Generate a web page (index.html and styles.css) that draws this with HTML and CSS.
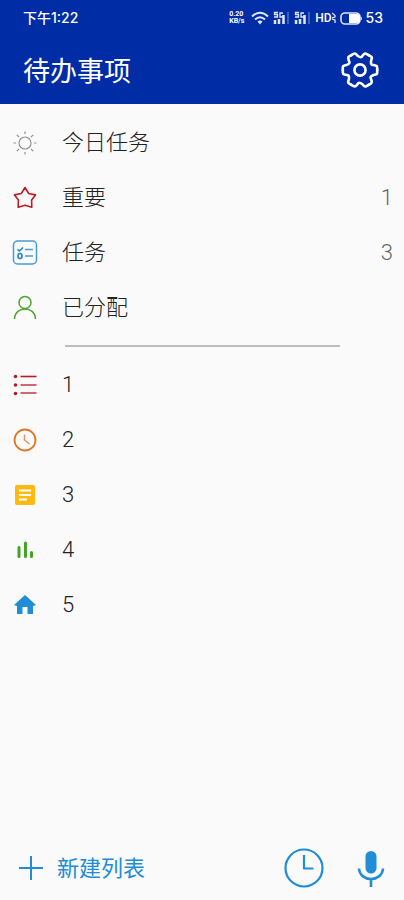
FILE: index.html
```html
<!DOCTYPE html>
<html lang="zh-CN">
<head>
<meta charset="utf-8">
<meta name="viewport" content="width=device-width, initial-scale=1">
<title>待办事项</title>
<link rel="stylesheet" href="styles.css">
</head>
<body>
<header class="header">
  <div class="status">
    <span class="status-time">下午1:22</span>
    <div class="status-icons">
      <span class="speed"><span>0.20</span><span>KB/s</span></span>
      <svg width="18" height="14" viewBox="0 0 18 14" fill="none" stroke="#dfe6ff" stroke-width="2"><path d="M1 5.500Q9-2 17 5.500M4 8.500Q9 4 14 8.500"/><path d="M6.500 10.500Q9 8.500 11.500 10.500L9 13.500Z" fill="#dfe6ff" stroke="none"/></svg>
      <svg width="17" height="14" viewBox="0 0 17 14" fill="none" stroke="#dfe6ff"><path d="M5 1.500H1.500V3.500H4.500V6H1M10 2H7V6H10V4.500" stroke-width="1.300"/><path d="M2 13V9M6 13V8M10.500 13V4" stroke-width="2.500"/><path d="M15 13V1" stroke="#3c61c4" stroke-width="2"/></svg>
      <svg width="17" height="14" viewBox="0 0 17 14" fill="none" stroke="#dfe6ff"><path d="M5 1.500H1.500V3.500H4.500V6H1M10 2H7V6H10V4.500" stroke-width="1.300"/><path d="M2 13V9M6 13V8M10.500 13V4" stroke-width="2.500"/><path d="M15 13V1" stroke="#3c61c4" stroke-width="2"/></svg>
      <span class="hd">HD</span>
      <svg class="waves" width="4" height="12" viewBox="0 0 4 12" fill="none" stroke="#dfe6ff" stroke-width="1.300"><path d="M0 1L3 3.500V5L0 6M0 7L3 8V11"/></svg>
      <svg class="battery" width="23" height="13" viewBox="0 0 23 13"><rect x="1" y="1" width="19" height="11" rx="4" fill="none" stroke="#dfe6ff" stroke-width="1.600"/><path d="M9 2H17Q20 2 20 4.500V8.500Q20 11 17 11H9Z" fill="#fff"/><path d="M21 4.500Q23 6.500 21 8.500Z" fill="#dfe6ff"/></svg>
      <span class="level">53</span>
    </div>
  </div>
  <div class="title-bar">
    <h1>待办事项</h1>
    <button class="icon-button" aria-label="设置">
      <svg width="40" height="40" viewBox="-20 -20 40 40" fill="none" stroke="#fff" stroke-width="2.600" stroke-linecap="round">
        <defs><path id="tooth" d="M17.200 0V2.500Q17.200 4.200 15.600 4.500L13.500 5C10.500 6.200 9.800 7.600 11.100 9.200L11.700 11.300Q12.100 12.800 10.800 13.600L8.600 14.900"/></defs>
        <use href="#tooth"/><use href="#tooth" transform="rotate(60)"/><use href="#tooth" transform="rotate(120)"/><use href="#tooth" transform="rotate(180)"/><use href="#tooth" transform="rotate(240)"/><use href="#tooth" transform="rotate(300)"/>
        <circle r="5.600"/>
      </svg>
    </button>
  </div>
</header>
<main>
  <nav aria-label="列表">
    <ul class="list">
      <li><a class="row" href="#today"><svg class="icon" viewBox="0 0 26 26" fill="none" stroke="#929292" stroke-width="1.200"><circle cx="13" cy="13" r="6"/><path d="M13 1.500V4M13 22V24.500M1.500 13H4M22 13H24.500M4.800 4.800L7 7M19 19L21.200 21.200M4.800 21.200L7 19M19 7L21.200 4.800"/></svg><span class="name">今日任务</span></a></li>
      <li><a class="row" href="#important"><svg class="icon" viewBox="0 0 26 26" fill="none" stroke="#bd1c22" stroke-width="1.600" stroke-linejoin="round"><path d="M13 2.500L16.700 8.500L23.500 9.900L19.600 14.900L19.800 22.200L13 20.200L6.200 22.200L6.400 14.900L2.500 9.900L9.300 8.500Z"/></svg><span class="name">重要</span><span class="count">1</span></a></li>
      <li><a class="row" href="#tasks"><svg class="icon" viewBox="0 0 26 26" fill="none" stroke="#4a9ada"><rect x="1.500" y="1" width="23" height="23" rx="4" stroke-width="1.500"/><path d="M13 9.500H21M13 16H21" stroke-width="1.400"/><path d="M5.500 9.500L7.500 11L11 7.500" stroke="#2588ce" stroke-width="1.600"/><ellipse cx="8" cy="16" rx="2" ry="2.500" stroke="#2588ce" stroke-width="1.700"/></svg><span class="name">任务</span><span class="count">3</span></a></li>
      <li><a class="row" href="#assigned"><svg class="icon" viewBox="0 0 26 26" fill="none" stroke="#4da42c" stroke-width="1.500"><circle cx="13" cy="7.500" r="6"/><path d="M2.500 24C3 10.500 23 10.500 23.500 24"/></svg><span class="name">已分配</span></a></li>
    </ul>
    <hr class="divider">
    <ul class="list">
      <li><a class="row" href="#list-1"><svg class="icon" viewBox="0 0 26 26" fill="none"><g fill="#b91924"><circle cx="3.500" cy="4.500" r="1.800"/><circle cx="3.500" cy="13" r="1.800"/><circle cx="3.500" cy="21.500" r="1.800"/></g><path d="M8.500 4.500H24.500" stroke="#b91924" stroke-width="1.600"/><path d="M8.500 13H24.500M8.500 21H24.500" stroke="#cf6870" stroke-width="1.800"/></svg><span class="name">1</span></a></li>
      <li><a class="row" href="#list-2"><svg class="icon" viewBox="0 0 26 26" fill="none" stroke="#df7727"><circle cx="13" cy="13" r="10.500" stroke-width="1.800"/><path d="M12.500 7.500V13L17.500 17" stroke="#e59660" stroke-width="1.500"/></svg><span class="name">2</span></a></li>
      <li><a class="row" href="#list-3"><svg class="icon" viewBox="0 0 26 26"><rect x="3" y="3" width="20" height="20" rx="2" fill="#ffb90f"/><path d="M7 8.500H19M7 13H19M7 17.500H15" stroke="#fff" stroke-width="2"/></svg><span class="name">3</span></a></li>
      <li><a class="row" href="#list-4"><svg class="icon" viewBox="0 0 26 26" stroke="#43a325" stroke-width="3" stroke-linecap="round"><path d="M7 10.500V19.500M13.500 6V19.500M19.500 15.500V19.500"/></svg><span class="name">4</span></a></li>
      <li><a class="row" href="#list-5"><svg class="icon" viewBox="0 0 26 26" fill="#208dd5"><path d="M13 3L24 13L21 14V22H15.500V15H10.500V22H5V14L2 13Z"/></svg><span class="name">5</span></a></li>
    </ul>
  </nav>
</main>
<footer class="footer">
  <button class="new-list"><svg width="26" height="26" viewBox="0 0 26 26" stroke="#208dd5" stroke-width="2"><path d="M13 1V25M1 13H25"/></svg><span>新建列表</span></button>
  <button class="icon-button" aria-label="提醒"><svg width="40" height="40" viewBox="0 0 40 40" fill="none" stroke="#208dd5" stroke-width="2.200"><circle cx="20" cy="20" r="18.500"/><path d="M20 7V20.500H29.500" stroke-linejoin="round"/></svg></button>
  <button class="icon-button voice" aria-label="语音输入"><svg width="30" height="40" viewBox="0 0 30 40" fill="none" stroke="#208dd5" stroke-width="2.600"><rect x="9.500" y="3" width="11" height="22.500" rx="5.500" fill="#208dd5" stroke="none"/><path d="M3 20.500C4 34.500 26 34.500 27 20.500M15 31V39"/></svg></button>
</footer>
</body>
</html>
```
FILE: styles.css
```css
* {
  box-sizing: border-box;
}

body {
  margin: 0;
  min-height: 100vh;
  display: flex;
  flex-direction: column;
  background: #fafafa;
  color: #222;
  font-family: Roboto, "Noto Sans CJK SC", sans-serif;
}

button {
  padding: 0;
  border: 0;
  background: none;
  color: inherit;
  font: inherit;
  cursor: pointer;
}

svg {
  display: block;
  flex: none;
}

.header {
  background: #002da5;
  color: #fff;
  padding-bottom: 4px;
}

.status {
  display: flex;
  align-items: center;
  justify-content: space-between;
  height: 36px;
  padding: 0 21px 0 23px;
  font-family: Inter, "Noto Sans CJK SC", sans-serif;
  font-size: 14px;
  line-height: 20px;
  font-weight: 500;
}

.status-icons {
  display: flex;
  align-items: center;
  gap: 4px;
}

.speed {
  display: flex;
  flex-direction: column;
  width: 18px;
  font-family: Roboto, sans-serif;
  font-size: 7px;
  line-height: 7px;
  font-weight: 700;
}

.hd {
  font-family: Roboto, sans-serif;
  font-size: 12px;
  font-weight: 500;
}

.waves {
  margin-left: -4px;
}

.battery {
  margin-right: -1px;
}

.title-bar {
  display: flex;
  align-items: center;
  justify-content: space-between;
  height: 64px;
  padding: 4px 24px 0 23px;
}

h1 {
  margin: 0;
  padding-top: 3px;
  font-size: 27px;
  line-height: 40px;
  font-weight: 400;
}

main {
  flex: 1;
  padding-top: 11px;
}

.list {
  margin: 0;
  padding: 0;
  list-style: none;
}

.row {
  display: flex;
  align-items: center;
  height: 55px;
  padding: 0 11px 0 12px;
  color: inherit;
  text-decoration: none;
}

.icon {
  width: 26px;
  height: 26px;
}

.name {
  flex: 1;
  margin-left: 24px;
  padding-top: 1px;
  font-size: 22px;
  line-height: 32px;
  font-weight: 300;
}

.count {
  color: #666;
  font-size: 22px;
  line-height: 32px;
  font-weight: 300;
}

.divider {
  height: 2px;
  margin: 10px 64px 10px 65px;
  border: 0;
  background: #bdbdbd;
}

.footer {
  display: flex;
  align-items: center;
  height: 64px;
  padding: 0 18px;
  color: #208dd5;
}

.new-list {
  display: flex;
  align-items: center;
  gap: 13px;
  margin-right: auto;
  font-size: 22px;
  line-height: 32px;
}

.new-list span {
  padding-top: 2px;
}

.voice {
  margin-left: 32px;
}
```
